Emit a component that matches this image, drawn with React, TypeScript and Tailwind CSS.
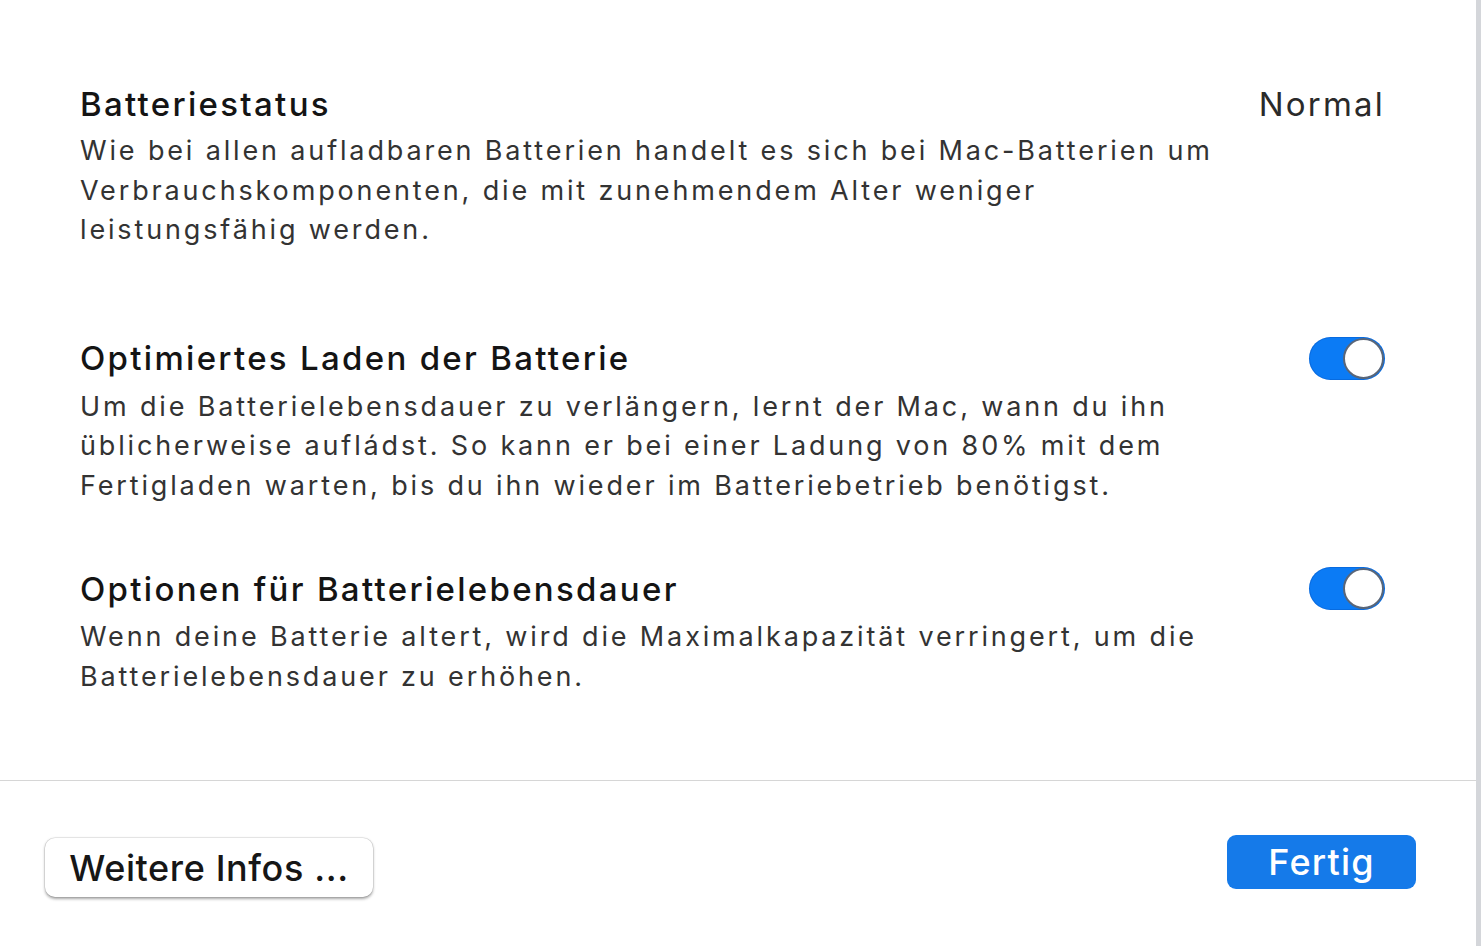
import React from "react";

function Toggle() {
  return (
    <div className="relative h-[43px] w-[76px] shrink-0 rounded-full bg-[#0b7bf5] shadow-[inset_0_0_0_1px_rgba(0,60,160,0.25)]">
      <div className="absolute right-[1px] top-[1px] h-[41px] w-[41px] rounded-full border-[2px] border-[#5a6678] bg-white" />
    </div>
  );
}

const titleCls = "text-[33px] leading-[40px] font-medium tracking-[2.3px] text-[#141414] whitespace-nowrap";
const bodyCls = "mt-[7px] text-[27px] leading-[39.5px] tracking-[2.85px] text-[#333333] whitespace-nowrap";

export default function App() {
  const font = { fontFamily: "Inter, 'Open Sans', 'Liberation Sans', sans-serif" };
  return (
    <div className="relative h-[946px] w-[1481px] overflow-hidden bg-white" style={font}>
      <div className="absolute right-0 top-0 h-full w-[5px] bg-[#d4d6da]" />
      <div className="flex flex-col pl-[80px] pr-[96px] pt-[84px]">
        <section>
          <div className="flex items-center justify-between">
            <h2 className={titleCls}>Batteriestatus</h2>
            <span className="text-[33px] leading-[40px] tracking-[2.2px] text-[#2a2a2a]">Normal</span>
          </div>
          <p className={bodyCls}>
            Wie bei allen aufladbaren Batterien handelt es sich bei Mac-Batterien um
            <br />
            Verbrauchskomponenten, die mit zunehmendem Alter weniger
            <br />
            leistungsfähig werden.
          </p>
        </section>
        <section className="mt-[87px]">
          <div className="flex items-center justify-between">
            <h2 className={titleCls}>Optimiertes Laden der Batterie</h2>
            <Toggle />
          </div>
          <p className={bodyCls}>
            Um die Batterielebensdauer zu verlängern, lernt der Mac, wann du ihn
            <br />
            üblicherweise aufládst. So kann er bei einer Ladung von 80% mit dem
            <br />
            Fertigladen warten, bis du ihn wieder im Batteriebetrieb benötigst.
          </p>
        </section>
        <section className="mt-[62px]">
          <div className="flex items-center justify-between">
            <h2 className={titleCls}>Optionen für Batterielebensdauer</h2>
            <Toggle />
          </div>
          <p className={bodyCls}>
            Wenn deine Batterie altert, wird die Maximalkapazität verringert, um die
            <br />
            Batterielebensdauer zu erhöhen.
          </p>
        </section>
      </div>
      <div className="mt-[84px] h-[1px] w-full bg-[#d6d6d6]" />
      <div className="flex items-start justify-between pl-[45px] pr-[65px] pt-[54px]">
        <button className="mt-[3px] h-[59px] w-[328px] rounded-[10px] bg-white text-[36px] font-medium tracking-[0.6px] text-[#161616] shadow-[0_1.5px_3px_rgba(0,0,0,0.35),0_0_0_0.5px_rgba(0,0,0,0.12)]">
          Weitere Infos ...
        </button>
        <button className="h-[54px] w-[189px] rounded-[9px] bg-[#157ae9] text-[36px] font-medium tracking-[1.2px] text-white">
          Fertig
        </button>
      </div>
    </div>
  );
}
